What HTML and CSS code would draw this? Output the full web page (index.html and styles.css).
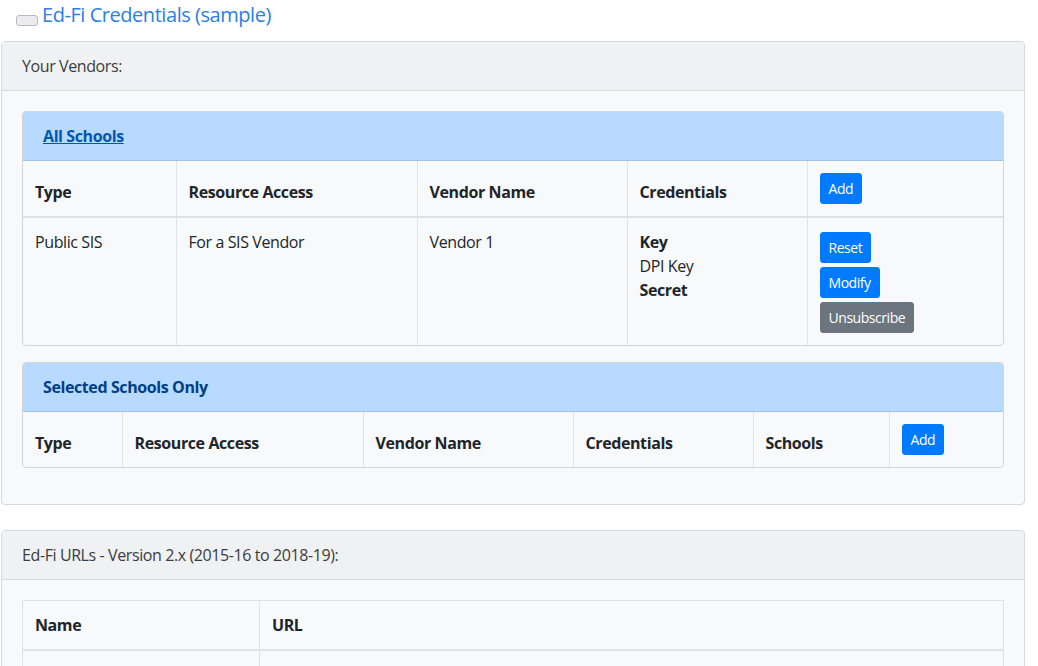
FILE: index.html
```html
<!DOCTYPE html>
<html lang="en">
<head>
<meta charset="utf-8">
<title>Ed-Fi Credentials (sample)</title>
<link rel="stylesheet" href="styles.css">
</head>
<body>
<div class="page">
  <div class="title-row">
    <button class="toggle" type="button" aria-label="Toggle"></button>
    <a class="title" href="#">Ed-Fi Credentials (sample)</a>
  </div>

  <section class="card">
    <div class="card-header">Your Vendors:</div>
    <div class="card-body">
      <div class="subcard">
        <div class="subcard-header"><a class="subcard-link" href="#">All Schools</a></div>
        <table class="grid">
          <colgroup>
            <col class="w153"><col class="w241"><col class="w210"><col class="w180"><col>
          </colgroup>
          <thead>
            <tr>
              <th>Type</th>
              <th>Resource Access</th>
              <th>Vendor Name</th>
              <th>Credentials</th>
              <th><button class="btn btn-primary" type="button">Add</button></th>
            </tr>
          </thead>
          <tbody>
            <tr>
              <td>Public SIS</td>
              <td>For a SIS Vendor</td>
              <td>Vendor 1</td>
              <td><strong>Key</strong><br>DPI Key<br><strong>Secret</strong></td>
              <td>
                <div class="actions">
                  <button class="btn btn-primary" type="button">Reset</button>
                  <button class="btn btn-primary" type="button">Modify</button>
                  <button class="btn btn-secondary" type="button">Unsubscribe</button>
                </div>
              </td>
            </tr>
          </tbody>
        </table>
      </div>

      <div class="subcard">
        <div class="subcard-header"><span class="subcard-title">Selected Schools Only</span></div>
        <table class="grid">
          <colgroup>
            <col class="w99"><col class="w241"><col class="w210"><col class="w180"><col class="w136"><col>
          </colgroup>
          <thead>
            <tr>
              <th>Type</th>
              <th>Resource Access</th>
              <th>Vendor Name</th>
              <th>Credentials</th>
              <th>Schools</th>
              <th><button class="btn btn-primary" type="button">Add</button></th>
            </tr>
          </thead>
        </table>
      </div>
    </div>
  </section>

  <section class="card card-spaced">
    <div class="card-header">Ed-Fi URLs - Version 2.x (2015-16 to 2018-19):</div>
    <div class="card-body">
      <table class="grid grid-boxed">
        <colgroup>
          <col class="w237"><col>
        </colgroup>
        <thead>
          <tr>
            <th>Name</th>
            <th>URL</th>
          </tr>
        </thead>
        <tbody>
          <tr>
            <td>&nbsp;</td>
            <td>&nbsp;</td>
          </tr>
        </tbody>
      </table>
    </div>
  </section>
</div>
</body>
</html>
```

FILE: styles.css
```css
* {
  box-sizing: border-box;
}

html, body {
  margin: 0;
  padding: 0;
  background: #ffffff;
}

body {
  font-family: "Open Sans", "Noto Sans", "Liberation Sans", sans-serif;
  font-size: 16px;
  line-height: 24px;
  letter-spacing: -0.4px;
  color: #212529;
}

.page {
  width: 1026px;
}

.title-row {
  height: 41px;
  display: flex;
  align-items: flex-start;
  padding-left: 16px;
}

.toggle {
  width: 22px;
  height: 11px;
  margin: 15px 4px 0 0;
  padding: 0;
  background: #ececee;
  border: 1px solid #b9b9bd;
  border-radius: 3px;
}

.title {
  font-size: 20px;
  line-height: 30px;
  letter-spacing: -0.45px;
  color: #2a80e4;
  text-decoration: none;
}

.card {
  margin-left: 1px;
  width: 1024px;
  background: #f8f9fa;
  border: 1px solid #d8d9da;
  border-radius: 4px;
  overflow: hidden;
}

.card-spaced {
  margin-top: 25px;
}

.card-header {
  padding: 12px 20px;
  background: #f0f1f2;
  border-bottom: 1px solid #d8d9da;
  color: #3a3d40;
}

.card-body {
  padding: 20px;
}

.subcard {
  border: 1px solid #d3d6d9;
  border-radius: 4px;
  margin-bottom: 16px;
  overflow: hidden;
}

.subcard-header {
  padding: 12px 20px;
  background: #b8daff;
  border-bottom: 1px solid #9ec4ec;
  font-weight: 700;
}

.subcard-link {
  color: #0056b3;
  text-decoration: underline;
}

.subcard-title {
  color: #004085;
}

.grid {
  width: 100%;
  border-collapse: collapse;
  table-layout: fixed;
}

.grid th,
.grid td {
  padding: 12px;
  border: 1px solid #dee2e6;
  text-align: left;
  vertical-align: top;
}

.grid th {
  font-weight: 700;
  vertical-align: bottom;
}

.grid thead th {
  border-bottom: 2px solid #dee2e6;
}

.grid tr > :first-child {
  border-left: 0;
}

.grid tr > :last-child {
  border-right: 0;
}

.grid thead tr:first-child > * {
  border-top: 0;
}

.grid tbody tr:last-child > *,
.grid thead:last-child tr > * {
  border-bottom: 0;
}

.grid-boxed {
  border: 1px solid #dee2e6;
  margin-bottom: 16px;
}

.grid-boxed thead:last-child tr > *,
.grid-boxed tbody tr:last-child > * {
  border-bottom: 1px solid #dee2e6;
}

.w99 { width: 99px; }
.w136 { width: 136px; }
.w153 { width: 153px; }
.w180 { width: 180px; }
.w210 { width: 210px; }
.w237 { width: 237px; }
.w241 { width: 241px; }

.actions {
  display: flex;
  flex-direction: column;
  align-items: flex-start;
  gap: 4px;
  padding-top: 2px;
}

.btn {
  display: inline-block;
  font-family: inherit;
  font-size: 14px;
  line-height: 21px;
  letter-spacing: -0.45px;
  padding: 4px 8px;
  border: 1px solid transparent;
  border-radius: 3px;
  color: #ffffff;
  cursor: pointer;
}

.btn-primary {
  background: #007bff;
  border-color: #007bff;
}

.btn-secondary {
  background: #6c757d;
  border-color: #6c757d;
}
```
